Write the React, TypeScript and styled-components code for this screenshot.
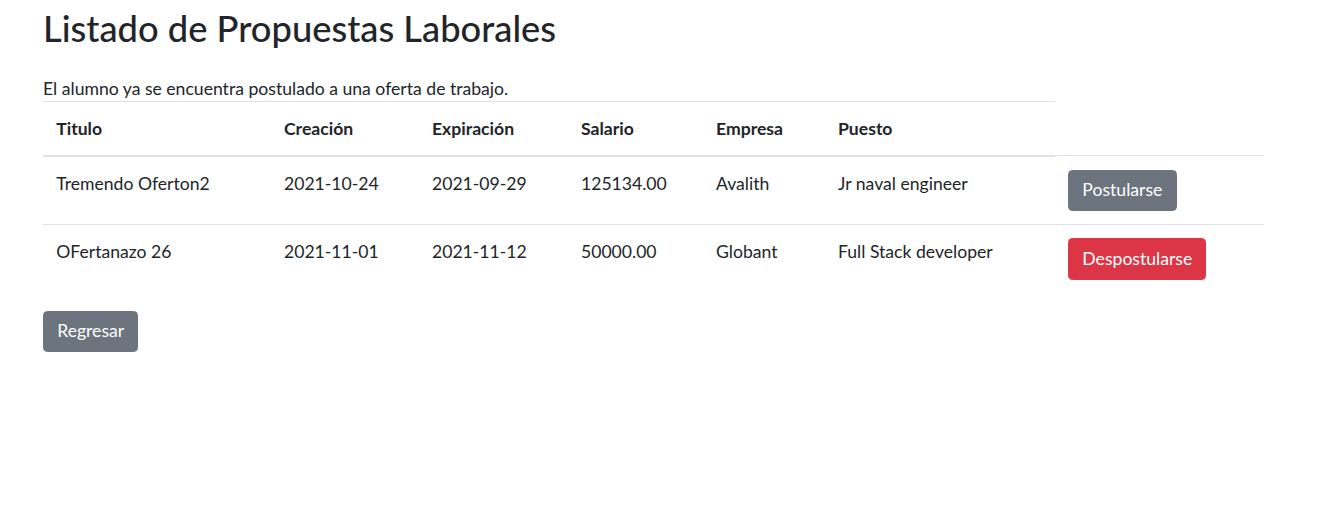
import React from "react";
import styled, { createGlobalStyle } from "styled-components";

const GlobalStyle = createGlobalStyle`
  html, body {
    margin: 0;
    padding: 0;
    background: #ffffff;
  }
  body {
    font-family: Lato, "Open Sans", sans-serif;
    font-size: 17.6px;
    line-height: 1.5;
    color: #212529;
  }
  * { box-sizing: border-box; }
`;

const Page = styled.div`
  padding: 3px 43px 0 43px;
  width: 1264px;
`;

const Title = styled.h1`
  margin: 3.5px 0 25.6px 0;
  font-size: 36.3px;
  line-height: 1.2;
  font-weight: 500;
  color: #212529;
`;

const Notice = styled.p`
  margin: 0;
  line-height: 25.4px;
`;

const Table = styled.table`
  width: 1221px;
  border-collapse: collapse;
  table-layout: fixed;
  margin-bottom: 17.6px;
`;

const Col = styled.col<{ $w: number }>`
  width: ${(p) => p.$w}px;
`;

const Th = styled.th`
  text-align: left;
  font-weight: 700;
  padding: 14.2px 13.2px 12.2px;
  vertical-align: bottom;
  border-top: 1px solid #dee2e6;
  border-bottom: 2px solid #dee2e6;
  line-height: 26.4px;
`;

const Td = styled.td`
  padding: 14.2px 13.2px 12.2px;
  vertical-align: top;
  border-top: 1px solid #dee2e6;
  line-height: 26.4px;
`;

const ButtonCell = styled(Td)`
  padding: 13.2px;
`;

const Button = styled.button<{ $variant: "secondary" | "danger" }>`
  display: inline-block;
  font-family: inherit;
  font-size: 17.6px;
  line-height: 26.4px;
  font-weight: 400;
  color: #ffffff;
  background: ${(p) => (p.$variant === "danger" ? "#dc3545" : "#6c757d")};
  border: 1px solid ${(p) => (p.$variant === "danger" ? "#dc3545" : "#6c757d")};
  border-radius: 4.4px;
  padding: 6.6px 13.2px;
  cursor: pointer;
`;

const offers = [
  {
    titulo: "Tremendo Oferton2",
    creacion: "2021-10-24",
    expiracion: "2021-09-29",
    salario: "125134.00",
    empresa: "Avalith",
    puesto: "Jr naval engineer",
    postulado: false,
  },
  {
    titulo: "OFertanazo 26",
    creacion: "2021-11-01",
    expiracion: "2021-11-12",
    salario: "50000.00",
    empresa: "Globant",
    puesto: "Full Stack developer",
    postulado: true,
  },
];

const widths = [227.8, 148, 149, 135, 122, 230.2, 209];

export default function App() {
  return (
    <>
      <GlobalStyle />
      <Page>
        <Title>Listado de Propuestas Laborales</Title>
        <Notice>El alumno ya se encuentra postulado a una oferta de trabajo.</Notice>
        <Table>
          <colgroup>
            {widths.map((w, i) => (
              <Col key={i} $w={w} />
            ))}
          </colgroup>
          <thead>
            <tr>
              <Th>Titulo</Th>
              <Th>Creación</Th>
              <Th>Expiración</Th>
              <Th>Salario</Th>
              <Th>Empresa</Th>
              <Th>Puesto</Th>
            </tr>
          </thead>
          <tbody>
            {offers.map((o) => (
              <tr key={o.titulo}>
                <Td>{o.titulo}</Td>
                <Td>{o.creacion}</Td>
                <Td>{o.expiracion}</Td>
                <Td>{o.salario}</Td>
                <Td>{o.empresa}</Td>
                <Td>{o.puesto}</Td>
                <ButtonCell>
                  {o.postulado ? (
                    <Button $variant="danger">Despostularse</Button>
                  ) : (
                    <Button $variant="secondary">Postularse</Button>
                  )}
                </ButtonCell>
              </tr>
            ))}
          </tbody>
        </Table>
        <Button $variant="secondary">Regresar</Button>
      </Page>
    </>
  );
}
